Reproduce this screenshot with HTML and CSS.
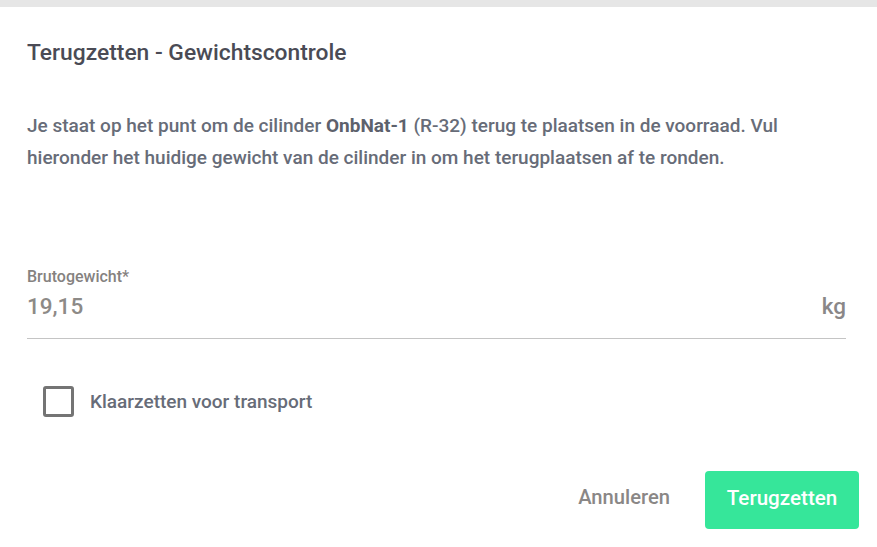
FILE: index.html
```
<!DOCTYPE html>
<html lang="nl">
<head>
<meta charset="utf-8">
<title>Terugzetten - Gewichtscontrole</title>
<link rel="stylesheet" href="styles.css">
</head>
<body>
<div class="topbar"></div>
<div class="dialog">
  <h2 class="title">Terugzetten - Gewichtscontrole</h2>
  <p class="intro">Je staat op het punt om de cilinder <strong>OnbNat-1</strong> (R-32) terug te plaatsen in de voorraad. Vul hieronder het huidige gewicht van de cilinder in om het terugplaatsen af te ronden.</p>
  <div class="field">
    <label class="field-label">Brutogewicht*</label>
    <div class="field-input">
      <span class="value">19,15</span>
      <span class="unit">kg</span>
    </div>
  </div>
  <div class="check-row">
    <span class="checkbox"></span>
    <span class="check-label">Klaarzetten voor transport</span>
  </div>
  <div class="actions">
    <button class="btn-text">Annuleren</button>
    <button class="btn-primary">Terugzetten</button>
  </div>
</div>
</body>
</html>
```
FILE: styles.css
```
* { box-sizing: border-box; }
html, body { margin: 0; padding: 0; background: #fff; }
body { font-family: Roboto, "Liberation Sans", Arial, sans-serif; }
.topbar { height: 7px; background: #e6e6e6; }
.dialog { padding: 32px 31px 0 27px; }
.title {
  margin: 0;
  font-size: 22.8px;
  line-height: 28px;
  font-weight: 500;
  color: #4a4b55;
}
.intro {
  margin: 43px 0 0 0;
  font-size: 19px;
  line-height: 32px;
  font-weight: 500;
  color: #676c78;
  padding-right: 50px;
}
.intro strong { font-weight: 700; color: #5d616c; }
.field { margin-top: 93px; }
.field-label {
  display: block;
  font-size: 16px;
  line-height: 20px;
  font-weight: 500;
  color: #85827f;
}
.field-input {
  margin-top: 5px;
  display: flex;
  justify-content: space-between;
  align-items: center;
  padding-bottom: 18px;
  border-bottom: 1px solid #c4c4c4;
}
.value { font-size: 22.5px; line-height: 28px; color: #8d8a87; font-weight: 500; }
.unit { font-size: 22.5px; line-height: 28px; color: #8a8788; font-weight: 500; }
.check-row {
  margin-top: 47px;
  margin-left: 16px;
  display: flex;
  align-items: center;
  gap: 16px;
}
.checkbox {
  width: 31px; height: 31px;
  border: 3px solid #747474;
  border-radius: 3px;
}
.check-label { font-size: 19px; font-weight: 500; color: #676c78; }
.actions {
  margin-top: 54px;
  margin-right: -13px;
  display: flex;
  justify-content: flex-end;
  align-items: center;
  gap: 19px;
}
.btn-text {
  font-family: inherit;
  background: none;
  border: 0;
  font-size: 20.2px;
  font-weight: 500;
  color: #8a8786;
  padding: 0 16px;
  height: 58px;
  margin-top: -6px;
}
.btn-primary {
  font-family: inherit;
  background: #36e69a;
  border: 0;
  border-radius: 4px;
  width: 154px;
  height: 58px;
  font-size: 20.6px;
  font-weight: 500;
  color: #fff;
  padding: 0 0 5px 0;
}
```
